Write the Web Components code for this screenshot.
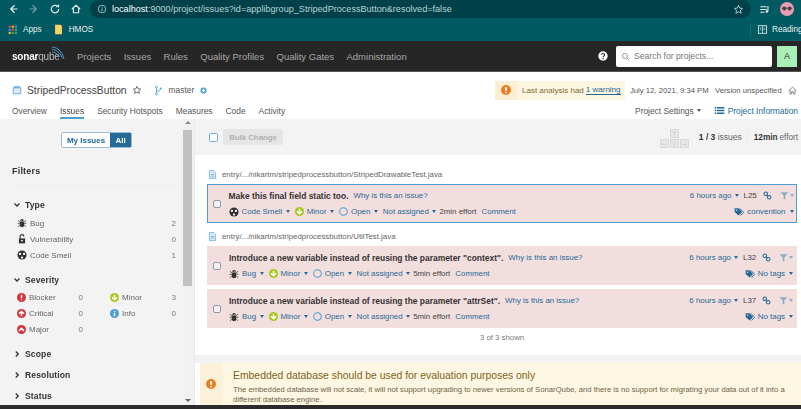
<!DOCTYPE html>
<html>
<head>
<meta charset="utf-8">
<title>StripedProcessButton</title>
<style>
  html, body { margin: 0; height: 409px; overflow: hidden; background: #fff; }
  body { font-family: "Liberation Sans", Arial, sans-serif; font-size: 8px; color: #444; }
</style>
</head>
<body>
<sq-app>
  <browser-bar></browser-bar>
  <sq-nav></sq-nav>
  <project-head></project-head>
  <div style="display:flex;height:286px">
    <issue-filters></issue-filters>
    <issue-page>
      <file-line>entry/.../nikartm/stripedprocessbutton/StripedDrawableTest.java</file-line>
      <issue-card selected type="Code Smell" kind="smell" effort="2min effort" line="L25" tag="convention">Make this final field static too.</issue-card>
      <file-line style="margin-top:6px">entry/.../nikartm/stripedprocessbutton/UtilTest.java</file-line>
      <issue-card type="Bug" kind="bug" effort="5min effort" line="L32" tag="No tags">Introduce a new variable instead of reusing the parameter "context".</issue-card>
      <issue-card type="Bug" kind="bug" effort="5min effort" line="L37" tag="No tags" style="margin-top:4px">Introduce a new variable instead of reusing the parameter "attrSet".</issue-card>
    </issue-page>
  </div>
  <div style="height:4px;background:#2b2b2b"></div>
</sq-app>

<script>
const icons = {
  back: '<path d="M10 3 5 8l5 5M5 8h9" fill="none" stroke="currentColor" stroke-width="1.6"/>',
  reload: '<path d="M13 8a5 5 0 1 1-1.5-3.5" fill="none" stroke="currentColor" stroke-width="1.6"/><path d="M13.500 1.500v4.200H9.300z" fill="currentColor"/>',
  browserhome: '<path d="M2.500 8 8 3l5.500 5M4.500 7v6h7V7" fill="none" stroke="currentColor" stroke-width="1.500"/>',
  info: '<circle cx="8" cy="8" r="6" fill="none" stroke="currentColor" stroke-width="1.300"/><path d="M8 7v4.500M8 4.500v1.300" stroke="currentColor" stroke-width="1.400"/>',
  star: '<path d="m8 2 1.800 4 4.200.4-3.200 2.800 1 4.300L8 11.200l-3.800 2.300 1-4.300L2 6.400 6.200 6z" fill="none" stroke="currentColor" stroke-width="1.300"/>',
  playlist: '<path d="M2 4h9M2 8h9M2 12h6" stroke="currentColor" stroke-width="1.500"/><path d="M13 3v7.500" stroke="currentColor" stroke-width="1.500"/><circle cx="11.500" cy="11" r="1.800" fill="currentColor"/>',
  face: '<circle cx="8" cy="8" r="8" fill="#ec9bb4"/><circle cx="5" cy="7.500" r="2.300" fill="#444"/><circle cx="11" cy="7.500" r="2.300" fill="#444"/><path d="M2 7h12" stroke="#444" stroke-width=".8"/>',
  reading: '<rect x="2" y="2.500" width="12" height="11" fill="none" stroke="currentColor" stroke-width="1.200"/><path d="M8 3v10M4 6h2.500M4 8.500h2.500M9.500 6H12M9.500 8.500H12" stroke="currentColor"/>',
  apps: '<g fill="#e5483a"><rect x="1" y="1" width="3.500" height="3.500"/><rect x="6" y="6" width="3.500" height="3.500"/></g><g fill="#f3b52c"><rect x="6" y="1" width="3.500" height="3.500"/><rect x="1" y="11" width="3.500" height="3.500"/></g><g fill="#3f8bf0"><rect x="11" y="1" width="3.500" height="3.500"/><rect x="1" y="6" width="3.500" height="3.500"/></g><g fill="#39a65a"><rect x="11" y="6" width="3.500" height="3.500"/><rect x="6" y="11" width="3.500" height="3.500"/><rect x="11" y="11" width="3.500" height="3.500"/></g>',
  folder: '<path d="M3 1h8l2 2v12H3z" fill="#f6d365"/>',
  search: '<circle cx="7" cy="7" r="4.500" fill="none" stroke="currentColor" stroke-width="1.300"/><path d="m10.500 10.500 3.500 3.500" stroke="currentColor" stroke-width="1.500"/>',
  help: '<circle cx="8" cy="8" r="7.500" fill="#fff"/><path d="M5.800 6.200a2.300 2.300 0 1 1 3.400 2c-.8.500-1.200.8-1.200 1.800M8 11.300v1.700" fill="none" stroke="#262626" stroke-width="1.700"/>',
  project: '<path d="M2 4.500h12V14H2z" fill="#dceaf6" stroke="#6aa9dc" stroke-width="1.500"/><path d="M3 2h10v2.500H3z" fill="#6aa9dc"/>',
  branch: '<path d="M5 3v10M5 9c4 0 6-1 6-4" fill="none" stroke="#4b9fd5" stroke-width="1.300"/><circle cx="5" cy="3" r="1.500" fill="#fff" stroke="#4b9fd5"/><circle cx="5" cy="13" r="1.500" fill="#fff" stroke="#4b9fd5"/><circle cx="11" cy="5" r="1.500" fill="#4b9fd5"/>',
  plus: '<circle cx="8" cy="8" r="7" fill="#4b9fd5"/><path d="M4 8h8M8 4v8" stroke="#fff" stroke-width="2.400"/>',
  warn: '<circle cx="8" cy="8" r="8" fill="#ed7d20"/><path d="M8 3v6.500M8 11v2" stroke="#fff" stroke-width="2.600"/>',
  home: '<path d="M1.500 8 8 2l6.500 6M3.500 7v7h3v-4h3v4h3V7" fill="none" stroke="#555" stroke-width="1.200"/>',
  list: '<path d="M1 3h2v2H1zM1 7h2v2H1zM1 11h2v2H1z" fill="#236a97"/><path d="M4 4h11M4 8h11M4 12h11" stroke="#236a97" stroke-width="2"/>',
  bug: '<path d="M5 4.500a3 3 0 0 1 6 0zM4.500 5.500h7V11a3.500 3.500 0 0 1-7 0z" fill="#333"/><path d="M1.500 3.500 4.500 6M14.500 3.500 11.500 6M1 8.500h3.500M15 8.500h-3.500M1.500 14l3-2.500M14.500 14l-3-2.500M8 5.500V15" stroke="#333" stroke-width="1.200" fill="none"/>',
  lock: '<path d="M3 7h10v8H3z" fill="#333"/><path d="M5 7V4a3 3 0 0 1 6 0" fill="none" stroke="#333" stroke-width="1.800"/><circle cx="8" cy="10.500" r="1.500" fill="#fff"/>',
  smell: '<circle cx="8" cy="8" r="7.300" fill="#333"/><circle cx="4.800" cy="6.300" r="1.800" fill="#fff"/><circle cx="11.200" cy="6.300" r="1.800" fill="#fff"/><circle cx="8" cy="12" r="1.800" fill="#fff"/>',
  blocker: '<circle cx="8" cy="8" r="8" fill="#d4333f"/><path d="M8 3v6.500M8 11v2" stroke="#fff" stroke-width="2.600"/>',
  critical: '<circle cx="8" cy="8" r="8" fill="#d4333f"/><path d="M3.500 8.500 8 4l4.500 4.500M8 5v8" fill="none" stroke="#fff" stroke-width="2.600"/>',
  major: '<circle cx="8" cy="8" r="8" fill="#d4333f"/><path d="M3.500 10.500 8 6l4.500 4.500" fill="none" stroke="#fff" stroke-width="3"/>',
  minor: '<circle cx="8" cy="8" r="8" fill="#a4c91c"/><path d="M3.500 7.500 8 12l4.500-4.500M8 11V3" fill="none" stroke="#fff" stroke-width="2.600"/>',
  infosev: '<circle cx="8" cy="8" r="8" fill="#4b9fd5"/><path d="M8 6.500V13M8 3v2" stroke="#fff" stroke-width="2.400"/>',
  open: '<circle cx="8" cy="8" r="6.800" fill="none" stroke="#4b9fd5" stroke-width="1.800"/>',
  link: '<circle cx="5" cy="5" r="3.200" fill="none" stroke="#236a97" stroke-width="1.800"/><circle cx="11" cy="11" r="3.200" fill="none" stroke="#236a97" stroke-width="1.800"/><path d="m6.500 6.500 3 3" stroke="#236a97" stroke-width="1.800"/>',
  filter: '<path d="M1 2h14L9.500 8v6.500h-3V8z" fill="#8cadc4"/>',
  tag: '<path d="M1 2h6l6 6-5.500 5.500L1 8z" fill="#236a97"/><path d="m9 2 6.500 6.500-5 5" fill="none" stroke="#236a97" stroke-width="1.500"/><circle cx="4" cy="5" r="1.200" fill="#f3dede"/>',
  file: '<path d="M2.500 1h7.500l3.500 3.500V15h-11z" fill="#dceaf6" stroke="#6aa9dc" stroke-width="1.300"/><path d="M5 8h6M5 11h6" stroke="#6aa9dc" stroke-width="1.300"/>',
  chevdown: '<path d="m3 5 5 5 5-5" fill="none" stroke="currentColor" stroke-width="2.600"/>',
  chevright: '<path d="m5.500 3 5 5-5 5" fill="none" stroke="currentColor" stroke-width="2.600"/>'
};

class SqIcon extends HTMLElement {
  constructor() {
    super();
    this.attachShadow({ mode: 'open' });
  }
  connectedCallback() {
    const size = this.getAttribute('size') || 10;
    this.shadowRoot.innerHTML = `<style>:host{display:inline-flex;flex:none;width:${size}px;height:${size}px}svg{display:block;width:100%;height:100%}</style>
      <svg viewBox="0 0 16 16">${icons[this.getAttribute('name')]}</svg>`;
  }
}
customElements.define('sq-icon', SqIcon);

class SqCaret extends HTMLElement {
  constructor() {
    super();
    this.attachShadow({ mode: 'open' });
    this.shadowRoot.innerHTML = `<style>:host{display:inline-block;flex:none;width:0;height:0;border:2.5px solid transparent;border-top:3px solid currentColor;border-bottom:0}</style>`;
  }
}
customElements.define('sq-caret', SqCaret);

class SqApp extends HTMLElement {
  constructor() {
    super();
    this.attachShadow({ mode: 'open' });
    this.shadowRoot.innerHTML = `<style>:host{display:block;width:801px;height:409px;overflow:hidden;filter:blur(.45px)}</style><slot></slot>`;
  }
}
customElements.define('sq-app', SqApp);

class BrowserBar extends HTMLElement {
  constructor() {
    super();
    this.attachShadow({ mode: 'open' });
    this.shadowRoot.innerHTML = `<style>
      :host { display: block; height: 41px; background: #015a61; color: #e6f0f0; font: 8.200px "Liberation Sans", Arial, sans-serif; }
      .top { display: flex; align-items: center; height: 18px; padding-left: 7px; }
      .nav { display: flex; align-items: center; gap: 9px; margin-right: 8px; }
      .nav sq-icon:nth-child(2) { transform: scaleX(-1); color: #6f9fa3; }
      .url { flex: 1; display: flex; align-items: center; height: 18px; background: #004149; border-radius: 9px; padding: 0 7px; font-size: 9.100px; color: #b9d2d4; margin-right: 8px; }
      .url b { font-weight: 400; color: #fff; }
      .url span { flex: 1; margin-left: 5px; white-space: nowrap; }
      .end { display: flex; align-items: center; gap: 10px; padding-right: 7px; }
      .marks { display: flex; align-items: center; height: 23px; padding-left: 8px; }
      .marks sq-icon { margin-right: 5px; }
      .marks .gap { margin-left: 11px; }
      .read { margin-left: auto; display: flex; align-items: center; white-space: nowrap; width: 51px; border-left: 1px solid #1d7077; height: 12px; padding-left: 6px; box-sizing: border-box; }
      .read sq-icon { margin-right: 4px; }
    </style>
    <div class="top">
      <div class="nav"><sq-icon name="back" size="12"></sq-icon><sq-icon name="back" size="12"></sq-icon><sq-icon name="reload" size="12"></sq-icon><sq-icon name="browserhome" size="12"></sq-icon></div>
      <div class="url"><sq-icon name="info" size="10"></sq-icon><span><b>localhost</b>:9000/project/issues?id=applibgroup_StripedProcessButton&amp;resolved=false</span><sq-icon name="star" size="11"></sq-icon></div>
      <div class="end"><sq-icon name="playlist" size="11"></sq-icon><sq-icon name="face" size="14"></sq-icon></div>
    </div>
    <div class="marks"><sq-icon name="apps" size="10"></sq-icon><span>Apps</span><sq-icon class="gap" name="folder" size="11"></sq-icon><span>HMOS</span>
      <div class="read"><sq-icon name="reading" size="11"></sq-icon>Reading</div></div>`;
  }
}
customElements.define('browser-bar', BrowserBar);

class SqNav extends HTMLElement {
  constructor() {
    super();
    this.attachShadow({ mode: 'open' });
    this.shadowRoot.innerHTML = `<style>
      :host { display: flex; align-items: center; height: 31px; background: #262626; color: #a8a8a8; font: 9.500px "Liberation Sans", Arial, sans-serif; padding: 0 4px 0 12px; box-sizing: border-box; border-bottom: 1px solid #555; }
      .logo { position: relative; color: #fff; font-size: 10px; width: 65px; font-weight: 700; letter-spacing: -.2px; flex: none; }
      .logo i { font-style: normal; font-weight: 400; color: #bbb; }
      .logo svg { position: absolute; left: 37px; top: -6px; width: 17px; height: 15px; }
      nav { display: flex; gap: 12.400px; flex: 1; white-space: nowrap; }
      .search { display: flex; align-items: center; gap: 4px; width: 156px; height: 21px; box-sizing: border-box; padding-left: 5px; background: #fff; border-radius: 2px; margin: 0 5px 0 8px; color: #777; font-size: 8.600px; }
      .avatar { width: 20px; height: 21px; background: #a9efb8; color: #333; display: flex; align-items: center; justify-content: center; font-size: 9px; }
    </style>
    <div class="logo">sonar<i>qube</i><svg viewBox="0 0 17 15"><path d="M3 2c5 0 10 4 12 12M3 4.500c4 0 8 3 10 8M3 7c3 0 5 2 7 5" fill="none" stroke="#4b9fd5" stroke-width="1"/></svg></div>
    <nav><span>Projects</span><span>Issues</span><span>Rules</span><span>Quality Profiles</span><span>Quality Gates</span><span>Administration</span></nav>
    <sq-icon name="help" size="10"></sq-icon>
    <div class="search"><sq-icon name="search" size="9"></sq-icon>Search for projects...</div>
    <div class="avatar">A</div>`;
  }
}
customElements.define('sq-nav', SqNav);

class ProjectHead extends HTMLElement {
  constructor() {
    super();
    this.attachShadow({ mode: 'open' });
    this.shadowRoot.innerHTML = `<style>
      :host { display: block; height: 47px; background: #fff; color: #555; font: 8px "Liberation Sans", Arial, sans-serif; white-space: nowrap; }
      .row1 { display: flex; align-items: center; height: 28px; padding: 8px 4px 0 12px; box-sizing: border-box; }
      .name { font-size: 10.300px; margin: 0 5px 0 5px; color: #444; }
      .master { margin: 0 6px 0 5px; font-size: 8.400px; }
      .warn { margin-left: auto; display: flex; align-items: center; height: 19px; width: 130px; box-sizing: border-box; background: #fdf6e0; color: #7f6a3a; }
      .warn div { width: 22px; height: 19px; display: flex; align-items: center; justify-content: center; background: #fbeed2; margin-right: 5px; }
      .warn a { color: #236a97; border-bottom: 1px solid #236a97; margin-left: 2px; }
      .date { width: 79px; margin: 0 6px 0 5px; font-size: 7.700px; }
      .ver { width: 67px; font-size: 7.700px; margin-right: 6px; }
      .row2 { display: flex; align-items: center; height: 11px; margin-top: 5px; padding: 0 3px 0 12px; gap: 13px; font-size: 8.400px; }
      .row2 .on { position: relative; color: #444; }
      .row2 .on::after { content: ""; position: absolute; left: 0; right: 0; bottom: -3.500px; height: 2px; background: #4b9fd5; }
      .settings { margin-left: auto; display: flex; align-items: center; gap: 3px; }
      .info { display: flex; align-items: center; gap: 3px; color: #236a97; }
    </style>
    <div class="row1"><sq-icon name="project" size="10"></sq-icon><span class="name">StripedProcessButton</span><sq-icon name="star" size="10"></sq-icon>
      <span style="width:11px"></span><sq-icon name="branch" size="11"></sq-icon><span class="master">master</span><sq-icon name="plus" size="7"></sq-icon>
      <div class="warn"><div><sq-icon name="warn" size="10"></sq-icon></div>Last analysis had <a>1 warning</a></div>
      <span class="date">July 12, 2021, 9:34 PM</span><span class="ver">Version unspecified</span><sq-icon name="home" size="9"></sq-icon></div>
    <div class="row2"><span>Overview</span><span class="on">Issues</span><span>Security Hotspots</span><span>Measures</span><span>Code</span><span>Activity</span>
      <div class="settings">Project Settings <sq-caret></sq-caret></div><div class="info"><sq-icon name="list" size="11"></sq-icon>Project Information</div></div>`;
  }
}
customElements.define('project-head', ProjectHead);

class FacetRow extends HTMLElement {
  constructor() {
    super();
    this.attachShadow({ mode: 'open' });
    this.shadowRoot.innerHTML = `<style>
      :host { display: flex; align-items: center; height: 16px; color: #666; }
      ::slotted(sq-icon) { margin-right: 3px; }
      .n { margin-left: auto; color: #777; }
    </style><slot></slot><span class="n"></span>`;
  }
  connectedCallback() {
    this.shadowRoot.querySelector('.n').textContent = this.getAttribute('n');
  }
}
customElements.define('facet-row', FacetRow);

class FacetHead extends HTMLElement {
  connectedCallback() {
    const name = this.hasAttribute('open') ? 'chevdown' : 'chevright';
    this.attachShadow({ mode: 'open' });
    this.shadowRoot.innerHTML = `<style>
      :host { display: flex; align-items: center; gap: 4px; height: 16px; font-weight: 700; font-size: 8.600px; color: #333; margin-left: -4px; letter-spacing: .1px; }
    </style><sq-icon name="${name}" size="8"></sq-icon><slot></slot>`;
  }
}
customElements.define('facet-head', FacetHead);

class IssueFilters extends HTMLElement {
  constructor() {
    super();
    this.attachShadow({ mode: 'open' });
    this.shadowRoot.innerHTML = `<style>
      :host { display: block; position: relative; flex: none; width: 195px; height: 286px; box-sizing: border-box; padding: 13px 18px 0 17px; background: #f3f3f3; font: 8px "Liberation Sans", Arial, sans-serif; overflow: hidden; border-right: 1px solid #e8e8e8; }
      .toggle { display: flex; width: 71px; height: 16px; margin: 0 0 0 44px; box-sizing: border-box; border: 1px solid #9dbdd2; border-radius: 2px; font-weight: 700; color: #236a97; background: #fff; font-size: 8px; }
      .toggle span { flex: 1; display: flex; align-items: center; justify-content: center; white-space: nowrap; }
      .toggle .on { flex: none; width: 21px; background: #236a97; color: #fff; }
      h3 { margin: 16px 0 0 -5px; height: 22px; font-size: 9px; color: #333; line-height: 14px; border-bottom: 1px solid #eee; box-sizing: border-box; letter-spacing: .2px; }
      .two { display: grid; grid-template-columns: 66px 66px; column-gap: 27px; margin-top: 1px; }
      .track { position: absolute; right: 1px; top: 0; bottom: 0; width: 10px; background: #f1f1f1; }
      .thumb { position: absolute; top: 11px; left: 0; width: 9px; height: 156px; background: #c1c1c1; }
      .track i { position: absolute; left: 2px; border: 3px solid transparent; }
      .up { top: 2px; border-bottom-color: #888 !important; border-top: 0 !important; }
      .down { bottom: 3px; border-top-color: #666 !important; border-bottom: 0 !important; }
      .closed { margin-top: 5px; }
    </style>
    <div class="toggle"><span>My Issues</span><span class="on">All</span></div>
    <h3>Filters</h3>
    <div style="margin-top:11px">
      <facet-head open>Type</facet-head>
      <div style="margin-top:2px">
      <facet-row n="2"><sq-icon name="bug" size="10"></sq-icon>Bug</facet-row>
      <facet-row n="0"><sq-icon name="lock" size="10"></sq-icon>Vulnerability</facet-row>
      <facet-row n="1"><sq-icon name="smell" size="10"></sq-icon>Code Smell</facet-row>
      </div>
    </div>
    <div style="margin-top:9px">
      <facet-head open>Severity</facet-head>
      <div class="two">
        <facet-row n="0"><sq-icon name="blocker" size="9"></sq-icon>Blocker</facet-row>
        <facet-row n="3"><sq-icon name="minor" size="9"></sq-icon>Minor</facet-row>
        <facet-row n="0"><sq-icon name="critical" size="9"></sq-icon>Critical</facet-row>
        <facet-row n="0"><sq-icon name="infosev" size="9"></sq-icon>Info</facet-row>
        <facet-row n="0"><sq-icon name="major" size="9"></sq-icon>Major</facet-row>
      </div>
    </div>
    <facet-head style="margin-top:9px">Scope</facet-head>
    <facet-head class="closed">Resolution</facet-head>
    <facet-head class="closed">Status</facet-head>
    <div class="track"><i class="up"></i><div class="thumb"></div><i class="down"></i></div>`;
  }
}
customElements.define('issue-filters', IssueFilters);

class FileLine extends HTMLElement {
  constructor() {
    super();
    this.attachShadow({ mode: 'open' });
    this.shadowRoot.innerHTML = `<style>
      :host { display: flex; align-items: center; gap: 5px; height: 14px; margin-bottom: 3px; color: #666; font-size: 7.850px; padding-left: 13px; white-space: nowrap; }
    </style><sq-icon name="file" size="9"></sq-icon><slot></slot>`;
  }
}
customElements.define('file-line', FileLine);

class IssueCard extends HTMLElement {
  connectedCallback() {
    const a = n => this.getAttribute(n);
    this.attachShadow({ mode: 'open' });
    this.shadowRoot.innerHTML = `<style>
      :host { display: flex; align-items: center; box-sizing: border-box; height: 39px; margin: 0 4px 0 12px; padding: 0 3px 0 5px; background: #f3dede; border: 1px solid #f3dede; font-size: 7.900px; color: #444; white-space: nowrap; }
      :host([selected]) { border: 1.500px solid #4b9fd5; padding: 0 2.500px 0 4.500px; }
      .box { flex: none; width: 6px; height: 6px; border: 1px solid #8a9bb0; border-radius: 2px; margin-right: 8px; background: #f8f0f0; }
      .main { flex: 1; display: flex; flex-direction: column; gap: 5px; min-width: 0; }
      .line { display: flex; align-items: center; height: 11px; }
      .msg { font-weight: 700; color: #333; font-size: 8.450px; margin-right: 5px; }
      a { color: #236a97; }
      .end { margin-left: auto; display: flex; align-items: center; }
      .it { display: flex; align-items: center; color: #236a97; margin-right: 5px; }
      .it sq-icon { margin-right: 3px; }
      .it sq-caret { margin-left: 3.500px; }
      .caret { color: #236a97; }
      .effort { color: #444; margin-right: 5px; margin-left: -2px; }
    </style>
    <div class="box"></div>
    <div class="main">
      <div class="line"><span class="msg"><slot></slot></span><a>Why is this an issue?</a>
        <div class="end"><a>6 hours ago</a><sq-caret class="caret" style="margin:0 5px 0 3px"></sq-caret><span style="width:17px">${a('line')}</span><span style="width:2px"></span><sq-icon name="link" size="9"></sq-icon><span style="width:8px"></span><sq-icon name="filter" size="9"></sq-icon><sq-caret style="color:#8cadc4;margin-left:1px"></sq-caret></div></div>
      <div class="line">
        <div class="it"><sq-icon name="${a('kind')}" size="10"></sq-icon>${a('type')}<sq-caret></sq-caret></div>
        <div class="it"><sq-icon name="minor" size="9"></sq-icon>Minor<sq-caret></sq-caret></div>
        <div class="it"><sq-icon name="open" size="9"></sq-icon>Open<sq-caret></sq-caret></div>
        <div class="it">Not assigned<sq-caret></sq-caret></div>
        <span class="effort">${a('effort')}</span><a>Comment</a>
        <div class="end"><sq-icon name="tag" size="10"></sq-icon><a style="margin-left:3px">${a('tag')}</a><sq-caret class="caret" style="margin-left:4px"></sq-caret></div></div>
    </div>`;
  }
}
customElements.define('issue-card', IssueCard);

class IssuePage extends HTMLElement {
  constructor() {
    super();
    this.attachShadow({ mode: 'open' });
    this.shadowRoot.innerHTML = `<style>
      :host { flex: 1; display: flex; flex-direction: column; min-width: 0; font: 8.500px "Liberation Sans", Arial, sans-serif; background: #fff; }
      .bar { display: flex; align-items: center; flex: none; height: 36px; background: #f3f3f3; padding: 0 3px 0 14px; color: #444; }
      .box { width: 7px; height: 7px; border: 1px solid #6aa9dc; border-radius: 1.500px; background: #fff; margin-right: 5px; }
      .bulk { height: 16px; width: 60px; display: flex; align-items: center; justify-content: center; background: #e6e6e6; border-radius: 2px; color: #b0b0b0; font-weight: 700; font-size: 7.800px; white-space: nowrap; }
      .keys { margin-left: auto; display: grid; grid-template-columns: repeat(3, 9px); grid-template-rows: 9px 9px; gap: 1px; margin-right: 10px; margin-top: 2px; }
      .keys span { grid-row: 2; background: #e6e6e6; border: 1px solid #d8d8d8; box-sizing: border-box; font-size: 5px; color: #999; display: flex; align-items: center; justify-content: center; }
      .keys span:first-child { grid-row: 1; grid-column: 2; }
      .count { margin-right: 5px; color: #666; white-space: nowrap; }
      b { color: #333; }
      .effort { padding-left: 6px; border-left: 1px solid #eaeaea; color: #666; height: 14px; display: flex; align-items: center; white-space: nowrap; gap: 2px; font-size: 8.200px; }
      .body { flex: 1; padding-top: 12px; }
      .shown { text-align: center; color: #777; height: 27px; line-height: 20px; font-size: 7.800px; padding: 0 4px 0 12px; }
      .gap { height: 8px; background: #f3f3f3; flex: none; }
      .notice { flex: none; display: flex; height: 42px; margin-left: 5px; background: #fdf6e2; color: #6f6447; overflow: hidden; }
      .notice .i { width: 22px; display: flex; align-items: center; justify-content: center; background: #fbf0d8; flex: none; }
      .notice .t { padding: 6px 0 0 11px; width: 572px; flex: none; font-size: 7.700px; line-height: 10px; }
      .notice h4 { margin: 0 0 2px; font-weight: 400; font-size: 10.400px; line-height: 14px; color: #7f6420; }
    </style>
    <div class="bar"><div class="box"></div><div class="bulk">Bulk Change</div>
      <div class="keys"><span>↑</span><span>←</span><span>↓</span><span>→</span></div>
      <div class="count"><b>1 / 3</b> issues</div><div class="effort"><b>12min</b> effort</div></div>
    <div class="body"><slot></slot><div class="shown">3 of 3 shown</div></div>
    <div class="gap"></div>
    <div class="notice"><div class="i"><sq-icon name="warn" size="10"></sq-icon></div>
      <div class="t"><h4>Embedded database should be used for evaluation purposes only</h4>The embedded database will not scale, it will not support upgrading to newer versions of SonarQube, and there is no support for migrating your data out of it into a different database engine.</div></div>`;
  }
}
customElements.define('issue-page', IssuePage);
</script>
</body>
</html>
